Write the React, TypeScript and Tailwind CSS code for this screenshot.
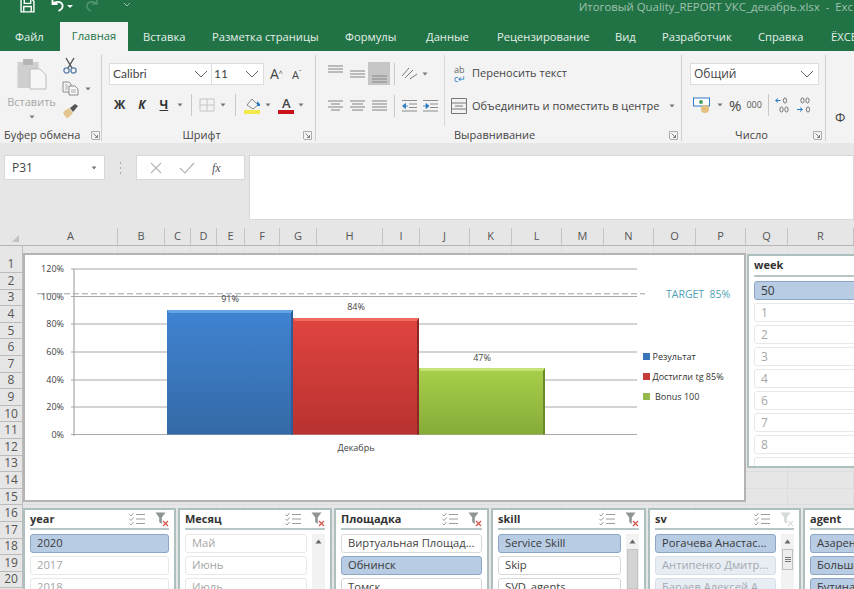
const COLS = [
  { n: "A", w: "w-[94px]" }, { n: "B", w: "w-[47px]" }, { n: "C", w: "w-[26px]" }, { n: "D", w: "w-[26px]" },
  { n: "E", w: "w-[28px]" }, { n: "F", w: "w-[35px]" }, { n: "G", w: "w-[37px]" }, { n: "H", w: "w-[66px]" },
  { n: "I", w: "w-[37px]" }, { n: "J", w: "w-[50px]" }, { n: "K", w: "w-[42px]" }, { n: "L", w: "w-[50px]" },
  { n: "M", w: "w-[42px]" }, { n: "N", w: "w-[50px]" }, { n: "O", w: "w-[42px]" }, { n: "P", w: "w-[50px]" },
  { n: "Q", w: "w-[42px]" }, { n: "R", w: "w-[66px]" },
];

const ROWS = Array.from({ length: 20 }, (_, i) => i + 1);

const TABS = [
  { t: "Файл", c: "ml-[15px] w-[27px]" },
  { t: "Вставка", c: "ml-[101px] w-[42px]" },
  { t: "Разметка страницы", c: "ml-[27px] w-[107px]" },
  { t: "Формулы", c: "ml-[26px] w-[53px]" },
  { t: "Данные", c: "ml-[28px] w-[44px]" },
  { t: "Рецензирование", c: "ml-[27px] w-[91px]" },
  { t: "Вид", c: "ml-[27px] w-[20px]" },
  { t: "Разработчик", c: "ml-[27px] w-[68px]" },
  { t: "Справка", c: "ml-[28px] w-[46px]" },
  { t: "ЁXCEL", c: "ml-[27px] w-[23px]" },
];

function Caret({ className = "" }: { className?: string }) {
  return (
    <svg width="6" height="4" viewBox="0 0 6 4" className={`shrink-0 ${className}`}>
      <path d="M0.5 0.5h5L3 3.5z" fill="#777" />
    </svg>
  );
}

function Chevron() {
  return (
    <svg width="14" height="8" viewBox="0 0 14 8">
      <path d="M1 1l6 6 6-6" fill="none" stroke="#666" strokeWidth="1" />
    </svg>
  );
}

function Launcher() {
  return (
    <svg width="9" height="9" viewBox="0 0 9 9">
      <path d="M0.5 8V0.5H8.5V8.5H1" fill="none" stroke="#999" strokeWidth="0.8" />
      <path d="M2.5 2.5l4 4M6.5 4v2.5H4" fill="none" stroke="#666" strokeWidth="0.8" />
    </svg>
  );
}

function Lines({ rows }: { rows: [number, number][] }) {
  return (
    <svg width="15" height="14" viewBox="0 0 15 14" className="shrink-0">
      {rows.map(([x, y], i) => (
        <line key={i} x1={x} x2={15 - x} y1={y} y2={y} stroke="#8d8d8d" strokeWidth="1.1" />
      ))}
    </svg>
  );
}

function Indent({ flip = false }: { flip?: boolean }) {
  return (
    <svg width="15" height="14" viewBox="0 0 15 14">
      <g stroke="#8d8d8d" strokeWidth="1">
        <line x1="0" x2="15" y1="1.5" y2="1.5" />
        <line x1="7" x2="15" y1="5" y2="5" />
        <line x1="7" x2="15" y1="8.5" y2="8.5" />
        <line x1="0" x2="15" y1="12" y2="12" />
      </g>
      <path d={flip ? "M0 7h3.5M3 4.5l3 2.5-3 2.5z" : "M6 7H3M3.5 4.5L0.5 7l3 2.5z"} fill="#2b7cc4" stroke="#2b7cc4" strokeWidth="0.8" />
    </svg>
  );
}

// decimal places buttons: arrow + zero marks, both drawn
function DecimalIcon({ flip = false }: { flip?: boolean }) {
  return (
    <svg width="15" height="17" viewBox="0 0 15 17">
      <g fill="none" stroke="#666" strokeWidth="0.9">
        <ellipse cx={flip ? "5.5" : "10"} cy="3.5" rx="1.6" ry="2.6" />
        {flip && <ellipse cx="10.5" cy="3.5" rx="1.6" ry="2.6" />}
        <ellipse cx={flip ? "11" : "6.5"} cy="12.5" rx="1.6" ry="2.6" />
        {!flip && <ellipse cx="11.5" cy="12.5" rx="1.6" ry="2.6" />}
      </g>
      <path d={flip ? "M0 12.5h5M3 10.5l2.5 2-2.5 2" : "M0.5 3.5h5M3 1.5l-2.5 2 2.5 2"} fill="none" stroke="#2b7cc4" strokeWidth="1" />
    </svg>
  );
}

function ChecklistIcon() {
  return (
    <svg width="16" height="14" viewBox="0 0 16 14">
      <g fill="none" stroke="#9c9c9c" strokeWidth="1">
        <path d="M0.5 2.5l1.5 1.5 2.5-3M0.5 7l1.5 1.5 2.5-3M0.5 11.5l1.5 1.5 2.5-3" />
        <path d="M7 2.5h9M7 7h9M7 11.5h9" />
      </g>
    </svg>
  );
}

function ClearFilterIcon({ off = false }: { off?: boolean }) {
  return (
    <svg width="16" height="15" viewBox="0 0 16 15">
      <path d="M0.5 0.5h10L6.8 5.5V12L4.2 10V5.5z" fill={off ? "#d5d9d9" : "#8f9494"} />
      <path d="M8 9l5 5M13 9l-5 5" stroke={off ? "#dcdcdc" : "#d9534f"} strokeWidth="1.2" />
    </svg>
  );
}

function VSep({ h = "h-[22px]" }: { h?: string }) {
  return <div className={`w-px bg-[#c8c8c8] ${h}`} />;
}

function Clipboard() {
  return (
    <svg width="30" height="32" viewBox="0 0 30 32">
      <rect x="0.5" y="4" width="21" height="26" fill="#cfcfcf" />
      <rect x="6" y="1" width="10" height="6" rx="1" fill="#b5b5b5" />
      <path d="M13 11h10l6 6v14H13z" fill="#f6f6f6" stroke="#bcbcbc" />
    </svg>
  );
}

function ScissorsIcon() {
  return (
    <svg width="16" height="17" viewBox="0 0 16 17">
      <path d="M4 1l6 10M12 1L6 11" fill="none" stroke="#555" strokeWidth="1.4" />
      <circle cx="4.5" cy="13.5" r="2.6" fill="none" stroke="#5b7fa8" strokeWidth="1.3" />
      <circle cx="11.5" cy="13.5" r="2.6" fill="none" stroke="#5b7fa8" strokeWidth="1.3" />
    </svg>
  );
}

function Painter() {
  return (
    <svg width="17" height="16" viewBox="0 0 17 16">
      <path d="M1 9l6-4 4 5-5 5c-2 0-4-3-5-6z" fill="#e3c58f" />
      <path d="M8 5l5-4 3 2-5 6z" fill="#555" />
    </svg>
  );
}

function CopyIcon() {
  return (
    <svg width="17" height="15" viewBox="0 0 17 15">
      <path d="M1 1h6l2 2v8H1z" fill="#f8f8f8" stroke="#8c8c8c" />
      <path d="M7 5h6l3 3v6H7z" fill="#f8f8f8" stroke="#8c8c8c" />
      <path d="M3 4h3M3 6h3M3 8h3M9 9h5M9 11h5" stroke="#9a9a9a" strokeWidth="0.8" />
    </svg>
  );
}

function Ribbon() {
  return (
    <div className="flex h-[92px] bg-[#f3f3f3] text-[#444]">
      {/* Clipboard */}
      <div className="flex flex-col w-[102px] shrink-0 mt-[4px] mb-[2px] border-r border-[#cfcfcf]">
        <div className="flex flex-1">
          <div className="flex flex-col items-center w-[59px] pl-[4px]">
            <div className="mt-[3px]"><Clipboard /></div>
            <span className="mt-[4px] text-[11px] text-[#a8a8a8]">Вставить</span>
            <Caret className="mt-[4px]" />
          </div>
          <div className="flex flex-col gap-[7px] pt-[2px] pl-[3px]">
            <ScissorsIcon />
            <div className="flex items-center gap-[6px]"><CopyIcon /><Caret /></div>
            <Painter />
          </div>
        </div>
        <div className="flex items-center h-[12px] pl-[4px] gap-[11px] text-[11px] font-medium">
          <span>Буфер обмена</span>
          <Launcher />
        </div>
      </div>

      {/* Font */}
      <div className="flex flex-col w-[214px] shrink-0 mt-[4px] mb-[2px] border-r border-[#cfcfcf]">
        <div className="flex-1 pl-[7px] pt-[8px]">
          <div className="flex items-center">
            <div className="flex items-center justify-between w-[103px] h-[22px] px-[3px] bg-white border border-[#dcdcdc] text-[12px] font-['Lato',sans-serif]">
              <span>Calibri</span>
              <Chevron />
            </div>
            <div className="flex items-center justify-between w-[52px] h-[22px] px-[2px] pr-[4px] bg-white border border-[#dcdcdc] border-l-0 text-[12px] font-['Lato',sans-serif]">
              <span>11</span>
              <Chevron />
            </div>
            <span className="ml-[6px] text-[14px] leading-none">A<sup className="text-[7px]">^</sup></span>
            <span className="ml-[9px] text-[11px] leading-none">A<sup className="text-[7px]">ˇ</sup></span>
          </div>
          <div className="flex items-center h-[24px] mt-[8px] pl-[5px]">
            <b className="text-[12px] text-[#333]">Ж</b>
            <i className="ml-[13px] text-[12px] font-bold text-[#333]">К</i>
            <span className="ml-[14px] text-[12px] font-bold underline text-[#333]">Ч</span>
            <Caret className="ml-[9px]" />
            <div className="ml-[8px]"><VSep /></div>
            <svg width="16" height="14" viewBox="0 0 16 14" className="ml-[7px]">
              <path d="M1 1h14v12H1zM8 1v12M1 7h14" fill="none" stroke="#c4c4c4" />
            </svg>
            <Caret className="ml-[5px]" />
            <div className="ml-[9px]"><VSep /></div>
            <svg width="18" height="18" viewBox="0 0 18 18" className="ml-[8px]">
              <path d="M3 9l5-6 6 6-5 4z" fill="#f5f5f5" stroke="#888" />
              <path d="M13 5l3 3v2h-3z" fill="#2b7cc4" />
              <rect x="0" y="14" width="16" height="4" fill="#f3e94a" />
            </svg>
            <Caret className="ml-[3px]" />
            <div className="ml-[7px] flex flex-col items-center w-[16px] leading-none">
              <span className="text-[13px] font-semibold text-[#444] leading-[13px]">A</span>
              <span className="w-[16px] h-[4px] bg-[#c8111b]" />
            </div>
            <Caret className="ml-[4px]" />
          </div>
        </div>
        <div className="relative flex items-center justify-center h-[12px] text-[11px] font-medium pr-[14px]">
          <span>Шрифт</span>
          <span className="absolute right-[3px] top-[2px]"><Launcher /></span>
        </div>
      </div>

      {/* Alignment */}
      <div className="flex flex-col w-[366px] shrink-0 mt-[4px] mb-[2px] border-r border-[#cfcfcf]">
        <div className="flex flex-1">
          <div className="w-[129px] shrink-0 h-[71px] border-r border-[#d6d6d6] pl-[12px]">
            <div className="flex items-center h-[23px] mt-[7px]">
              <div className="-mt-[6px]"><Lines rows={[[0, 2], [0, 5], [0, 8]]} /></div>
              <div className="ml-[7px]"><Lines rows={[[0, 4], [0, 7], [0, 10]]} /></div>
              <div className="flex items-center justify-center w-[22px] h-[23px] ml-[3px] bg-[#c6c6c6]">
                <div className="mt-[6px]"><Lines rows={[[0, 6], [0, 9], [0, 12]]} /></div>
              </div>
              <div className="ml-[4px]"><VSep /></div>
              <svg width="18" height="15" viewBox="0 0 18 15" className="ml-[6px]">
                <path d="M1 10L8 2M4 12l8-8M9 13l7-5" stroke="#777" fill="none" />
              </svg>
              <Caret className="ml-[3px]" />
            </div>
            <div className="flex items-center h-[20px] mt-[11px]">
              <Lines rows={[[0, 2], [3, 5], [0, 8], [3, 11]]} />
              <div className="ml-[7px]"><Lines rows={[[0, 2], [2, 5], [0, 8], [2, 11]]} /></div>
              <div className="ml-[7px]"><Lines rows={[[0, 2], [0, 5], [0, 8], [0, 11]]} /></div>
              <div className="ml-[7px]"><VSep /></div>
              <div className="ml-[7px]"><Indent /></div>
              <div className="ml-[6px]"><Indent flip /></div>
            </div>
          </div>
          <div className="pl-[6px] text-[11px] font-medium text-[#444] whitespace-nowrap">
            <div className="flex items-center h-[23px] mt-[7px]">
              <span className="flex flex-col w-[16px] ml-[3px] text-[9px] leading-[9px] text-[#666]">
                <span>ab</span>
                <span className="text-[#2b7cc4]">c↵</span>
              </span>
              <span className="ml-[2px]">Переносить текст</span>
            </div>
            <div className="flex items-center h-[20px] mt-[11px]">
              <svg width="16" height="16" viewBox="0 0 16 16" className="shrink-0">
                <path d="M0.5 0.5h15v15H0.5zM0.5 5h15M0.5 11h15M4 8h8" fill="none" stroke="#777" />
              </svg>
              <span className="ml-[5px]">Объединить и поместить в центре</span>
              <Caret className="ml-[10px]" />
            </div>
          </div>
        </div>
        <div className="relative flex items-center h-[12px] pl-[138px] text-[11px] font-medium">
          <span>Выравнивание</span>
          <span className="absolute right-[3px] top-[2px]"><Launcher /></span>
        </div>
      </div>

      {/* Number */}
      <div className="flex flex-col w-[144px] shrink-0 mt-[4px] mb-[2px] border-r border-[#cfcfcf]">
        <div className="flex-1 pl-[8px] pt-[8px]">
          <div className="flex items-center justify-between w-[129px] h-[22px] px-[3px] pr-[4px] bg-white border border-[#dcdcdc] text-[12px]">
            <span>Общий</span>
            <Chevron />
          </div>
          <div className="flex items-center h-[22px] mt-[9px] pl-[3px]">
            <svg width="19" height="17" viewBox="0 0 19 17" className="shrink-0">
              <rect x="0.5" y="1" width="16" height="8" fill="#fff" stroke="#2b7cc4" />
              <circle cx="8" cy="5" r="2" fill="#4aa05e" />
              <circle cx="12" cy="12" r="4" fill="#e3c07f" />
            </svg>
            <Caret className="ml-[5px]" />
            <span className="ml-[6px] text-[15px] text-[#444]">%</span>
            <span className="ml-[5px] text-[9px] text-[#555]">000</span>
            <div className="ml-[6px]"><VSep /></div>
            <div className="ml-[6px]"><DecimalIcon /></div>
            <div className="ml-[7px]"><DecimalIcon flip /></div>
          </div>
        </div>
        <div className="relative flex items-center justify-center h-[12px] text-[11px] font-medium pr-[4px]">
          <span>Число</span>
          <span className="absolute right-[3px] top-[2px]"><Launcher /></span>
        </div>
      </div>

      <div className="pl-[9px] pt-[57px] text-[13px] text-[#444]">Ф</div>
    </div>
  );
}

function FormulaBar() {
  return (
    <div className="flex h-[85px] bg-[#e6e6e6] pt-[12px]">
      <div className="flex items-center justify-between w-[101px] h-[25px] ml-[4px] px-[7px] bg-white border border-[#d8d8d8] text-[12px] text-[#444]">
        <span>P31</span>
        <Caret />
      </div>
      <div className="flex flex-col justify-center gap-[3px] w-[31px] h-[25px] items-center">
        <span className="w-px h-[2px] bg-[#a8a8a8]" />
        <span className="w-px h-[2px] bg-[#a8a8a8]" />
        <span className="w-px h-[2px] bg-[#a8a8a8]" />
      </div>
      <div className="flex items-center w-[109px] h-[25px] bg-white border border-[#d8d8d8] pl-[13px]">
        <svg width="12" height="12" viewBox="0 0 12 12">
          <path d="M1 1l10 10M11 1L1 11" stroke="#b5b5b5" strokeWidth="1.2" />
        </svg>
        <svg width="16" height="12" viewBox="0 0 16 12" className="ml-[17px]">
          <path d="M1 6l5 5L15 1" fill="none" stroke="#b5b5b5" strokeWidth="1.2" />
        </svg>
        <span className="ml-[17px] text-[12px] italic font-['Liberation_Serif',serif] text-[#555]">fx</span>
      </div>
      <div className="ml-[4px] flex-1 h-[65px] bg-white border border-[#d8d8d8]" />
    </div>
  );
}

function ColumnHeaders() {
  return (
    <div className="flex h-[18px] bg-[#e6e6e6] border-b border-[#b5b5b5]">
      <div className="relative w-[24px] shrink-0">
        <svg width="8" height="8" viewBox="0 0 8 8" className="absolute right-[4px] bottom-[2px]">
          <path d="M7 0v7H0z" fill="#c2c2c2" />
        </svg>
      </div>
      {COLS.map((c) => (
        <div key={c.n} className={`${c.w} shrink-0 flex items-center justify-center border-r border-[#c4c4c4] text-[11px] font-medium text-[#555]`}>
          {c.n}
        </div>
      ))}
    </div>
  );
}

function Chart() {
  const ticks = [
    { l: "120%", y: 269 }, { l: "100%", y: 296.5 }, { l: "80%", y: 324 },
    { l: "60%", y: 352 }, { l: "40%", y: 380 }, { l: "20%", y: 407 }, { l: "0%", y: 434.5 },
  ];
  const font = "'Open Sans', sans-serif";
  return (
    <svg width="719" height="246" viewBox="25 255 719 246">
      <defs>
        <linearGradient id="blueBar" x1="0" y1="0" x2="0" y2="1">
          <stop offset="0" stopColor="#3f83d2" />
          <stop offset="1" stopColor="#346aa6" />
        </linearGradient>
        <linearGradient id="redBar" x1="0" y1="0" x2="0" y2="1">
          <stop offset="0" stopColor="#e0443f" />
          <stop offset="1" stopColor="#b83230" />
        </linearGradient>
        <linearGradient id="greenBar" x1="0" y1="0" x2="0" y2="1">
          <stop offset="0" stopColor="#a8d04a" />
          <stop offset="1" stopColor="#86ab39" />
        </linearGradient>
      </defs>
      {ticks.map((t) => (
        <g key={t.l}>
          <line x1="71" x2="637" y1={t.y} y2={t.y} stroke="#a8a8a8" strokeWidth="1.2" />
          <text x="64" y={t.y + 3} textAnchor="end" fontFamily={font} fontSize="9" fill="#444">{t.l}</text>
        </g>
      ))}
      <line x1="74" x2="74" y1="269" y2="436" stroke="#a8a8a8" strokeWidth="1.2" />
      <line x1="37" x2="645" y1="293.7" y2="293.7" stroke="#98a4a8" strokeWidth="1.1" strokeDasharray="6 3" />

      <rect x="167" y="310" width="126" height="124.5" fill="url(#blueBar)" />
      <path d="M167 310h126l-2 3h-122z" fill="#65a4e6" />
      <path d="M293 310v124.5h-2V313z" fill="#2c5d96" />
      <rect x="293" y="318" width="126" height="116.5" fill="url(#redBar)" />
      <path d="M293 318h126l-2 3h-122z" fill="#ee6b63" />
      <path d="M419 318v116.5h-2V321z" fill="#8f2825" />
      <rect x="419" y="368" width="126" height="66.5" fill="url(#greenBar)" />
      <path d="M419 368h126l-2 3h-122z" fill="#c5e277" />
      <path d="M545 368v66.5h-2V371z" fill="#6b8a2c" />

      <g fontFamily={font} fontSize="9" fill="#444" textAnchor="middle">
        <text x="230" y="302">91%</text>
        <text x="356" y="310">84%</text>
        <text x="482" y="361">47%</text>
        <text x="356" y="451">Декабрь</text>
      </g>
      <text x="666" y="297.5" fontFamily={font} fontSize="10.5" fontWeight="500" fill="#4f9fb5" className="whitespace-pre">TARGET  85%</text>

      <g fontFamily={font} fontSize="9" fill="#333">
        <rect x="643" y="353" width="7" height="7" fill="#3a74bb" />
        <text x="652.5" y="359.5">Результат</text>
        <rect x="643" y="373" width="7" height="7" fill="#c63c3a" />
        <text x="652.5" y="379.5">Достигли tg 85%</text>
        <rect x="643" y="393" width="7" height="7" fill="#95b94a" />
        <text x="655" y="399.5">Bonus 100</text>
      </g>
    </svg>
  );
}

type Item = { t: string; k: "on" | "off" | "live" | "soft" };

function itemClass(k: Item["k"]) {
  if (k === "on") return "bg-[#b8cce4] border-[#8ea6c6] text-[#3a3a3a]";
  if (k === "live") return "bg-white border-[#d8d8d8] text-[#444]";
  if (k === "soft") return "bg-[#e8edf4] border-[#d8dfe8] text-[#a4a9b0]";
  return "bg-white border-[#e8e8e8] text-[#a6a6a6]";
}

function Slicer({ title, items, w, scroll, thumb, off }: { title: string; items: Item[]; w: string; scroll?: boolean; thumb?: "long" | "short"; off?: boolean }) {
  return (
    <div className={`${w} h-[100px] shrink-0 bg-white border-2 border-b-0 border-[#aebfc0] px-[5px]`}>
      <div className="flex items-center h-[20px] border-b-2 border-[#b7c6c6]">
        <b className="text-[11px] text-[#333]">{title}</b>
        <div className="ml-auto -mr-[2px] flex items-center gap-[10px]">
          <ChecklistIcon />
          <ClearFilterIcon off={off} />
        </div>
      </div>
      <div className="flex mt-[4px] gap-[5px]">
        <div className="flex flex-col flex-1 min-w-0 gap-[3px]">
          {items.map((it) => (
            <div key={it.t} className={`${itemClass(it.k)} h-[19px] shrink-0 flex items-center px-[6px] rounded-[3px] border text-[11.2px] whitespace-nowrap overflow-hidden`}>
              {it.t}
            </div>
          ))}
        </div>
        {scroll && (
          <div className="flex flex-col items-center w-[13px] h-[60px] bg-[#f2f2f2]">
            <svg width="7" height="5" viewBox="0 0 7 5" className="mt-[5px]">
              <path d="M0.5 4.5h6L3.5 0.5z" fill="#666" />
            </svg>
            {thumb === "long" && <div className="mt-[5px] w-[11px] h-[40px] bg-[#d4d4d4] border border-[#c4c4c4]" />}
            {thumb === "short" && (
              <div className="mt-[5px] w-[11px] h-[21px] bg-[#ececec] border border-[#c0c0c0] flex flex-col items-center justify-center gap-[1px]">
                <span className="w-[6px] h-px bg-[#777]" />
                <span className="w-[6px] h-px bg-[#777]" />
                <span className="w-[6px] h-px bg-[#777]" />
              </div>
            )}
          </div>
        )}
      </div>
    </div>
  );
}

function WeekSlicer() {
  const weeks = ["1", "2", "3", "4", "6", "7", "8", ""];
  return (
    <div className="absolute left-[747px] top-[8px] w-[120px] h-[214px] bg-white border-2 border-[#aebfc0] px-[5px] overflow-hidden">
      <div className="flex items-center h-[21px] border-b-2 border-[#b7c6c6]">
        <b className="text-[11px] text-[#333]">week</b>
      </div>
      <div className="flex flex-col gap-[3px] mt-[4px]">
        <div className={`${itemClass("on")} h-[19px] flex items-center px-[6px] rounded-[3px] border text-[12px]`}>50</div>
        {weeks.map((w, i) => (
          <div key={i} className={`${itemClass("off")} h-[19px] flex items-center px-[6px] rounded-[3px] border text-[12px]`}>{w}</div>
        ))}
      </div>
    </div>
  );
}

function Sheet() {
  return (
    <div className="relative flex-1 overflow-hidden font-['Open_Sans',sans-serif]">
      {ROWS.map((r) => (
        <div key={r} className={`flex ${r === 1 ? "h-[27px]" : "h-[16.6px]"}`}>
          <div className={`w-[23px] shrink-0 flex justify-center bg-[#e6e6e6] border-b border-r border-[#bcbcbc] text-[12px] font-medium leading-[16px] text-[#555] ${r === 1 ? "items-end" : "items-center"}`}>
            {r}
          </div>
          {COLS.map((c, i) => (
            <div key={c.n} className={`${c.w} ${i === 0 ? "ml-px" : ""} shrink-0 border-r border-b border-[#dedede]`} />
          ))}
        </div>
      ))}

      <div className="absolute left-[23px] top-[7px] w-[723px] h-[249px] bg-white border-2 border-[#b4b4b4]">
        <Chart />
      </div>

      <WeekSlicer />

      <div className="absolute left-[23px] top-[262px] flex gap-[2px]">
        <Slicer title="year" w="w-[153px]" items={[{ t: "2020", k: "on" }, { t: "2017", k: "off" }, { t: "2018", k: "off" }]} />
        <Slicer title="Месяц" w="w-[154px]" scroll items={[{ t: "Май", k: "off" }, { t: "Июнь", k: "off" }, { t: "Июль", k: "off" }]} />
        <Slicer title="Площадка" w="w-[155px]" items={[{ t: "Виртуальная Площад...", k: "live" }, { t: "Обнинск", k: "on" }, { t: "Томск", k: "live" }]} />
        <Slicer title="skill" w="w-[155px]" scroll thumb="long" items={[{ t: "Service Skill", k: "on" }, { t: "Skip", k: "live" }, { t: "SVD_agents", k: "live" }]} />
        <Slicer title="sv" w="w-[153px]" scroll thumb="short" off items={[{ t: "Рогачева Анастас...", k: "on" }, { t: "Антипенко Дмитр...", k: "soft" }, { t: "Бараев Алексей А...", k: "soft" }]} />
        <Slicer title="agent" w="w-[120px]" items={[{ t: "Азаренко Анна", k: "on" }, { t: "Большакова", k: "on" }, { t: "Бутина", k: "on" }]} />
      </div>
    </div>
  );
}

export default function App() {
  return (
    <div className="w-[854px] h-[589px] overflow-hidden flex flex-col bg-[#e6e6e6] font-['Open_Sans',sans-serif]">
      <div className="h-[51px] shrink-0 bg-[#217346] text-[#e4efe8]">
        <div className="flex items-center h-[22px]">
          <svg width="15" height="15" viewBox="0 0 14 14" className="ml-[20px] -mt-[12px]">
            <path d="M1 1h10l2 2v10H1zM4 1v4h6V1M3.5 13V8h7v5" fill="none" stroke="#fff" strokeWidth="1.3" />
          </svg>
          <svg width="15" height="14" viewBox="0 0 14 14" className="ml-[15px] -mt-[12px]">
            <path d="M2 1v5h5M2 6c2-3 9-3 10 1 .6 3-2 5-4 6" fill="none" stroke="#fff" strokeWidth="1.8" />
          </svg>
          <span className="ml-[2px] -mt-[10px] w-0 h-0 border-x-[3px] border-x-transparent border-t-[3px] border-t-white" />
          <svg width="14" height="14" viewBox="0 0 14 14" className="ml-[12px] -mt-[12px]">
            <path d="M12 1v5H7M12 6C10 3 3 3 2 7c-.6 3 2 5 4 6" fill="none" stroke="#4f9370" strokeWidth="1.6" />
          </svg>
          <svg width="8" height="6" viewBox="0 0 8 6" className="ml-[24px] -mt-[12px]">
            <path d="M1 1l3 3 3-3" fill="none" stroke="#9cc2ac" />
          </svg>
          <span className="ml-auto -mt-[9px] pr-[1px] text-[11.4px] whitespace-pre text-[#9fc0ad]">Итоговый Quality_REPORT УКС_декабрь.xlsx  -  Exc</span>
        </div>
        <div className="relative flex items-end h-[29px] text-[11.2px] font-medium">
          {TABS.map((t) => (
            <span key={t.t} className={`${t.c} shrink-0 h-[29px] leading-[29px] whitespace-nowrap`}>{t.t}</span>
          ))}
          <span className="absolute left-[60px] top-0 flex items-center justify-center w-[68px] h-[29px] bg-[#f3f3f3] text-[#217346]">Главная</span>
        </div>
      </div>
      <Ribbon />
      <FormulaBar />
      <ColumnHeaders />
      <Sheet />
    </div>
  );
}
